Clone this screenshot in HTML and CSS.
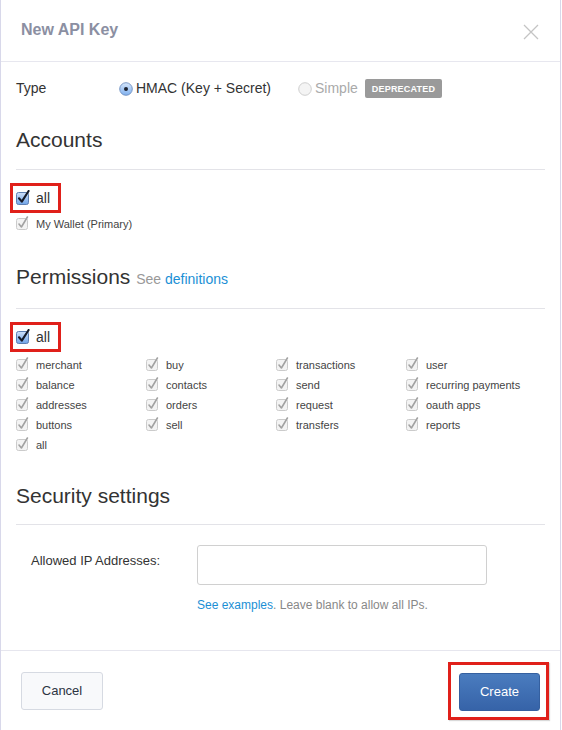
FILE: index.html
```html
<!DOCTYPE html>
<html>
<head>
<meta charset="utf-8">
<link rel="stylesheet" href="styles.css">
</head>
<body>
<div class="modal">
  <div class="modal-header">
    <h1 class="title">New API Key</h1>
    <svg class="close" width="16" height="16" viewBox="0 0 16 16"><path d="M1 1L15 15M15 1L1 15" stroke="#c4c4c4" stroke-width="1.3" fill="none"/></svg>
  </div>
  <div class="modal-body">
    <div class="type-row">
      <span class="type-label">Type</span>
      <span class="radio-opt">
        <svg class="radio" width="14" height="14" viewBox="0 0 14 14"><defs><linearGradient id="rg" x1="0" y1="0" x2="0" y2="1"><stop offset="0" stop-color="#d6e6fb"/><stop offset="1" stop-color="#7fb0ee"/></linearGradient></defs><circle cx="7" cy="7" r="6.3" fill="url(#rg)" stroke="#6f8fbf" stroke-width="0.9"/><circle cx="7" cy="7" r="2" fill="#1c2230"/></svg>
        <span>HMAC (Key + Secret)</span>
      </span>
      <span class="radio-opt disabled">
        <svg class="radio" width="14" height="14" viewBox="0 0 14 14"><circle cx="7" cy="7" r="6.3" fill="#f4f4f4" stroke="#c9c9c9" stroke-width="0.9"/></svg>
        <span>Simple</span>
        <span class="badge">DEPRECATED</span>
      </span>
    </div>

    <h2 class="section-title">Accounts</h2>
    <hr class="rule">
    <div class="highlight">
      <svg class="cb-main" width="14" height="15" viewBox="0 0 14 15"><defs><linearGradient id="cg1" x1="0" y1="0" x2="0" y2="1"><stop offset="0" stop-color="#cfe1fa"/><stop offset="1" stop-color="#6fa4e8"/></linearGradient></defs><rect x="0.5" y="2.5" width="12" height="12" rx="2" fill="url(#cg1)" stroke="#5d7fb3"/><path d="M3 8.3L5.8 11.6L12.6 1" stroke="#151a28" stroke-width="2.1" fill="none" stroke-linecap="round" stroke-linejoin="round"/></svg>
      <span class="main-label">all</span>
    </div>
    <div class="cb-item single"><svg class="cb" width="13" height="14" viewBox="0 0 13 14"><rect x="0.5" y="2.5" width="11" height="11" rx="2" fill="#f3f3f3" stroke="#cbcbcb"/><path d="M3 8L5.4 11L11.4 1" stroke="#a2a2a2" stroke-width="1.6" fill="none" stroke-linecap="round" stroke-linejoin="round"/></svg><span>My Wallet (Primary)</span></div>

    <h2 class="section-title perms">Permissions <span class="see">See <a class="link">definitions</a></span></h2>
    <hr class="rule">
    <div class="highlight">
      <svg class="cb-main" width="14" height="15" viewBox="0 0 14 15"><defs><linearGradient id="cg2" x1="0" y1="0" x2="0" y2="1"><stop offset="0" stop-color="#cfe1fa"/><stop offset="1" stop-color="#6fa4e8"/></linearGradient></defs><rect x="0.5" y="2.5" width="12" height="12" rx="2" fill="url(#cg2)" stroke="#5d7fb3"/><path d="M3 8.3L5.8 11.6L12.6 1" stroke="#151a28" stroke-width="2.1" fill="none" stroke-linecap="round" stroke-linejoin="round"/></svg>
      <span class="main-label">all</span>
    </div>
    <div class="perm-grid" id="grid"></div>

    <h2 class="section-title security">Security settings</h2>
    <hr class="rule sec-rule">
    <div class="ip-row">
      <label class="ip-label">Allowed IP Addresses:</label>
      <div class="ip-field">
        <div class="ip-input"></div>
        <p class="help"><a class="link">See examples</a>. Leave blank to allow all IPs.</p>
      </div>
    </div>
  </div>
  <div class="modal-footer">
    <button class="btn btn-cancel">Cancel</button>
    <span class="highlight-btn"><button class="btn btn-create">Create</button></span>
  </div>
</div>
<script>
(function(){
  var items=["merchant","buy","transactions","user","balance","contacts","send","recurring payments","addresses","orders","request","oauth apps","buttons","sell","transfers","reports","all"];
  var svg='<svg class="cb" width="13" height="14" viewBox="0 0 13 14"><rect x="0.5" y="2.5" width="11" height="11" rx="2" fill="#f3f3f3" stroke="#cbcbcb"/><path d="M3 8L5.4 11L11.4 1" stroke="#a2a2a2" stroke-width="1.6" fill="none" stroke-linecap="round" stroke-linejoin="round"/></svg>';
  var g=document.getElementById('grid');
  items.forEach(function(t){
    var d=document.createElement('div');d.className='cb-item';
    d.innerHTML=svg+'<span></span>';d.lastChild.textContent=t;g.appendChild(d);
  });
})();
</script>
</body>
</html>
```
FILE: styles.css
```css
* { box-sizing: border-box; }
html, body { margin: 0; padding: 0; background: #fff; }
body { font-family: "Liberation Sans", Arial, sans-serif; color: #333; width: 562px; }
.modal {
  width: 561px;
  height: 730px;
  border-left: 1px solid #d8d8ea;
  border-right: 1px solid #d8d8ea;
  background: #fff;
  display: flex;
  flex-direction: column;
}
.modal-header {
  height: 62px;
  flex-shrink: 0;
  border-bottom: 1px solid #e7e7ef;
  display: flex;
  align-items: center;
  justify-content: space-between;
  padding: 2px 19px 4px 20px;
}
.title { margin: 0; font-size: 16px; font-weight: bold; color: #8b8fa2; }
.close { margin-top: 4px; margin-right: 2px; }
.modal-body { padding: 0 15px 0 15px; flex: 1; }
.type-row {
  display: flex; align-items: center; height: 52px; font-size: 14px; padding-top: 0;
}
.type-label { width: 103px; }
.radio-opt { display: flex; align-items: center; gap: 3px; }
.radio-opt .radio { margin-top: 1px; }
.radio-opt + .radio-opt { margin-left: 27px; }
.radio-opt.disabled { color: #aaa; }
.badge {
  margin-left: 4px; background: #9a9a9a; color: #fff; font-size: 9px; font-weight: bold;
  padding: 5px 7px 4px; border-radius: 2px; letter-spacing: 0.2px;
}
.section-title { margin: 0; font-size: 21px; font-weight: normal; color: #333; line-height: 26px; }
.type-row + .section-title { margin-top: 13px; }
.rule { border: 0; border-top: 1px solid #e3e3e8; margin: 16px 0 13px; }
.highlight {
  display: inline-flex; align-items: center; gap: 6px;
  border: 3px solid #e0201a; margin-left: -6px;
  padding: 2px 8px 2px 3px; height: 30px;
}
.cb-main { margin-top: -2px; }
.main-label { font-size: 14px; color: #333; }
.cb-item { display: flex; align-items: center; gap: 7px; font-size: 11px; color: #444; height: 20px; }
.cb-item .cb { margin-top: -3px; }
.cb-item.single { margin-top: 1px; height: 20px; }
.section-title.perms { margin-top: 30px; }
.see { font-size: 14px; color: #999; }
.link { color: #1b8fd5; text-decoration: none; }
.perm-grid { display: grid; grid-template-columns: repeat(4, 130px); margin-top: 3px; }
.section-title.security { margin-top: 28px; }
.sec-rule { margin: 15px 0 0; }
.ip-row { display: flex; margin-top: 20px; }
.ip-label { width: 181px; padding-left: 15px; font-size: 13px; padding-top: 8px; color: #333; }
.ip-input { width: 290px; height: 40px; border: 1px solid #d0d0d0; border-radius: 3px; }
.help { margin: 13px 0 0; font-size: 12px; color: #888; }
.modal-footer {
  flex-shrink: 0;
  border-top: 1px solid #e6e6ee; height: 80px;
  display: flex; align-items: center; justify-content: space-between;
  padding: 0 11px 0 20px;
}
.btn { font-family: inherit; font-size: 13px; height: 38px; border-radius: 3px; cursor: pointer; }
.btn-cancel { width: 82px; background: #f8f9fb; border: 1px solid #d6dae2; color: #2c3442; }
.highlight-btn { border: 3px solid #e0201a; padding: 8px 6px 6px 8px; display: inline-flex; box-shadow: 1px 1px 1px rgba(0,0,0,0.15); }
.btn-create { width: 81px; background: linear-gradient(#4a7cbf, #3663a8); border: 1px solid #3560a0; color: #fff; }
```
